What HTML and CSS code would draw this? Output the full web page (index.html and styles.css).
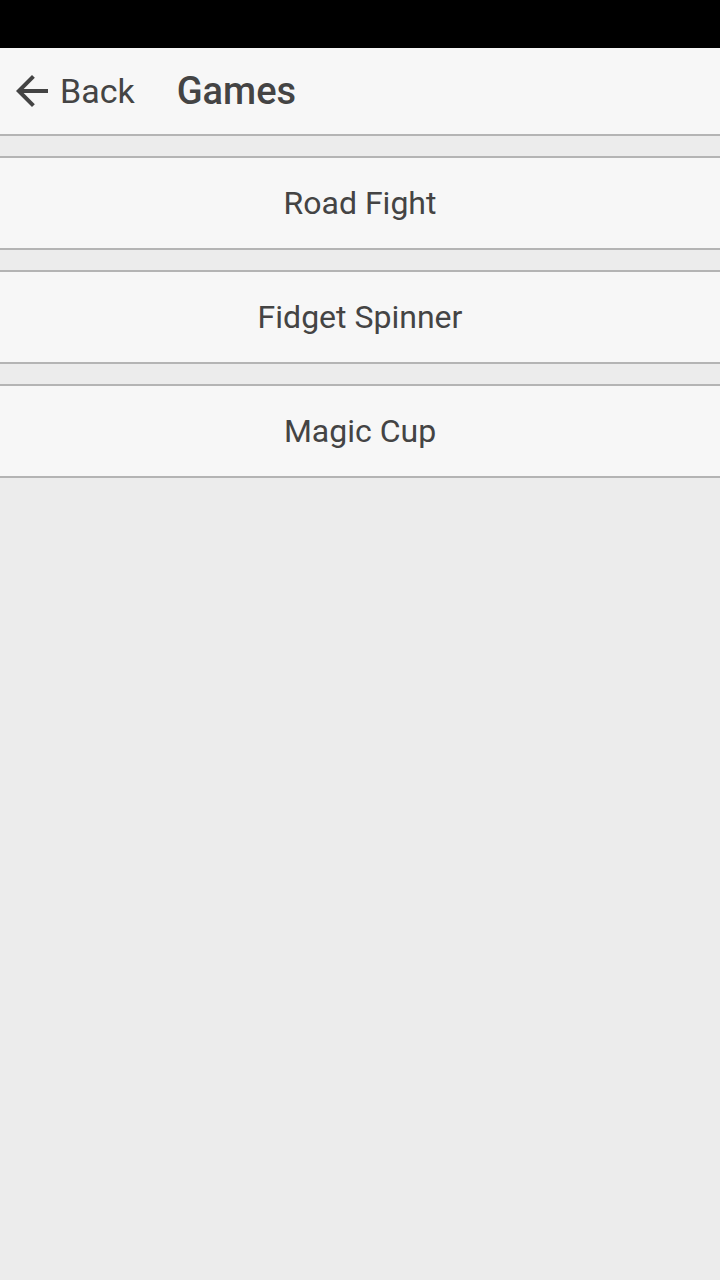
FILE: index.html
```html
<!DOCTYPE html>
<html lang="en">
<head>
    <meta charset="UTF-8">
    <title>Games</title>
    <link rel="stylesheet" href="styles.css">
</head>
<body>

<div class="status-bar"></div>

<div class="header">
    <div class="back">
        <svg class="back-icon" viewBox="0 0 24 24" width="48" height="48">
            <path d="M20 11H7.83l5.59-5.59L12 4l-8 8 8 8 1.41-1.41L7.83 13H20v-2z" fill="#444"/>
        </svg>
        <span>Back</span>
    </div>
    <h1>Games</h1>
</div>

<div class="list">
    <div class="item">Road Fight</div>
    <div class="item">Fidget Spinner</div>
    <div class="item">Magic Cup</div>
</div>

</body>
</html>
```

FILE: styles.css
```css
body {
    font-family: Roboto, 'Noto Sans', sans-serif;
    background: #ececec;
    margin: 0;
    padding: 0;
    color: #444;
}

.status-bar {
    height: 48px;
    background: #000;
}

.header {
    height: 86px;
    background: #f7f7f7;
    border-bottom: 2px solid #b4b4b4;
    display: flex;
    align-items: center;
}

.back {
    display: flex;
    align-items: center;
    padding-left: 8px;
    font-size: 34px;
    color: #444;
}

.back span {
    margin-left: 4px;
}

h1 {
    margin: 0 0 0 42px;
    font-size: 38px;
    font-weight: 500;
    color: #444;
}

.list {
    padding-top: 20px;
    display: flex;
    flex-direction: column;
    gap: 20px;
}

.item {
    height: 90px;
    background: #f7f7f7;
    border-top: 2px solid #b4b4b4;
    border-bottom: 2px solid #b4b4b4;
    display: flex;
    align-items: center;
    justify-content: center;
    font-size: 32px;
}
```
